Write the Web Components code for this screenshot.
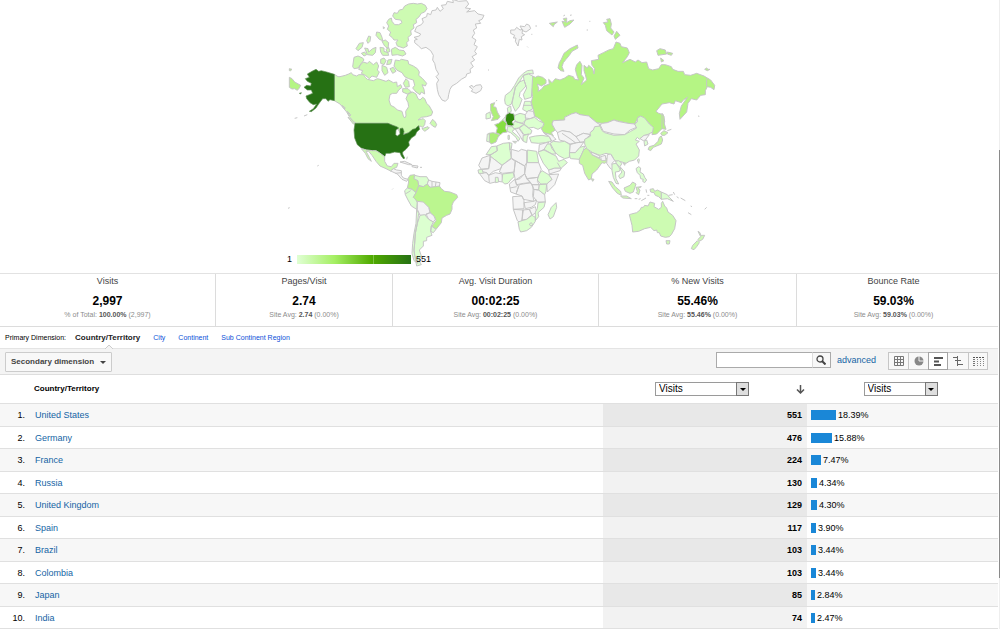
<!DOCTYPE html>
<html lang="en">
<head>
<meta charset="utf-8">
<title>Location report</title>
<style>
  body { margin: 0; background: #fff; color: #000; font-family: "Liberation Sans", Arial, sans-serif; font-size: 9px; line-height: 12px; }
</style>
</head>
<body>
<ga-report>
  <ga-map></ga-map>
  <ga-scorecard>
    <ga-metric name="Visits" value="2,997">% of Total: <b>100.00%</b> (2,997)</ga-metric>
    <ga-metric name="Pages/Visit" value="2.74">Site Avg: <b>2.74</b> (0.00%)</ga-metric>
    <ga-metric name="Avg. Visit Duration" value="00:02:25">Site Avg: <b>00:02:25</b> (0.00%)</ga-metric>
    <ga-metric name="% New Visits" value="55.46%">Site Avg: <b>55.46%</b> (0.00%)</ga-metric>
    <ga-metric name="Bounce Rate" value="59.03%">Site Avg: <b>59.03%</b> (0.00%)</ga-metric>
  </ga-scorecard>
  <ga-dimensions></ga-dimensions>
  <ga-toolbar></ga-toolbar>
  <ga-table></ga-table>
</ga-report>

<template id="t-report">
  <style>
    :host { display: block; position: relative; }
    ::slotted(:not(ga-map)) { margin-right: 2px; }
    .thumb { position: absolute; right: 0; top: 150px; bottom: 51px; width: 1px; background: #8a8a8a; }
    .track { position: absolute; right: 0; top: 0; bottom: 0; width: 1px; background: #eee; }
  </style>
  <slot></slot>
  <div class="track"></div><div class="thumb"></div>
</template>

<template id="t-map">
  <style>
    :host { display: flex; justify-content: center; }
    .map { position: relative; width: 440px; }
    svg { display: block; width: 100%; }
    path { stroke: #c6c6c6; stroke-width: 3; stroke-linejoin: round; fill: #dcffd0; }
    .n { fill: #f4f4f4; }
    .us { fill: #267114; stroke: #5f8f55; stroke-width: 2; }
    .de { fill: #328a0e; }
    .fr { fill: #87df43; }
    .uk { fill: #aeef78; }
    .ru { fill: #b5f584; }
    .br { fill: #bbf68f; }
    .in { fill: #c6f8a2; }
    .ca { fill: #cdfbb2; }
    .cn { fill: #d6fdc5; }
    .legend { position: absolute; left: 7px; bottom: 8px; display: flex; align-items: center; gap: 5px; }
    .bar { width: 114px; height: 9px; background: linear-gradient(to right, #e0ffd4, #a5ef63 33%, #50aa00 66%, #267114); }
    .bar::after { content: ""; display: block; width: 1px; height: 9px; margin-left: 76px; background: #7cc344; }
  </style>
  <div class="map">
    <svg viewBox="840 0 1320 819" role="img" aria-label="Visits by country">
      <g transform="translate(840 0)">
        <path class="ru" d="M28 232L36 236 44 246 62 256 58 264 52 271 44 266 36 267 28 262ZM28 206l8 2-4 4-4 0z"/>
        <path class="ca" d="M163 223L174 230 180 230 196 226 206 222 214 218 218 224 230 228 236 224 250 224 256 232 262 238 280 242 292 236 300 238 318 244 326 240 340 248 350 246 352 260 362 254 366 262 356 270 350 280 338 280 330 284 327 300 332 316 344 322 352 330 366 334 370 348 374 354 378 348 377 334 386 320 384 308 378 296 384 282 398 276 408 282 414 296 420 300 428 292 434 296 440 310 448 318 458 336 454 346 440 350 424 352 414 360 430 356 436 362 434 374 428 382 420 378 410 382 396 396 372 402 362 402 352 384 338 376 324 370 228 370 220 364 208 350 200 336 180 312 163 302Z"/>
        <path class="ca" d="M450 370l8-12 8 8 4 8-4 8-8-4zM426 386l18-6 4 4-14 10zM204 352l8 4 14 16-6 0z"/>
        <path class="ca" d="M222 172L234 168 248 174 252 180 244 190 234 204 222 206 218 200ZM240 196L250 186 262 190 268 184 280 194 290 186 296 198 292 210 298 216 290 232 276 228 268 236 256 226 244 220 248 212 236 208ZM302 178l10-4 6 8-6 12-10-4zM306 196l14 6 4 16-10 8-8-14zM324 180l12-2-4 14-12 2zM346 180L358 182 364 178 384 182 386 192 400 198 412 206 418 216 416 226 428 236 440 250 436 258 426 254 432 268 434 282 424 276 420 284 408 276 398 264 404 256 400 240 386 236 374 230 366 218 350 210 342 198ZM330 206l10-4 8 12-10 6zM370 250l8-14 8 8 2 16-12 2zM368 266l16 0 10 10-12 6-14-6z"/>
        <path class="ca" d="M228 146L238 130 250 128 246 142 234 152ZM260 122l6-14 6 2-2 14-6 6zM244 160l10-4 6 8-8 4zM254 144L264 146 266 156 278 146 288 142 286 158 278 166 262 164ZM290 96l10 2 6 14 2 10-10-4-10-12zM306 124l10-4 10 8-2 18-10-8zM300 142l12 2 0 10 12 4 2 8-18 0-6-10zM318 148l8-6 4 12-8 4zM310 80l4 4-4 2z"/>
        <path class="ca" d="M374 18L386 12 400 10 412 12 424 10 436 16 441 26 434 36 424 40 416 52 408 58 410 68 400 74 402 84 392 92 394 104 384 112 386 122 380 128 382 138 370 144 352 138 348 128 354 120 342 120 336 112 328 106 332 96 322 88 326 78 320 68 326 58 334 54 336 64 344 74 356 74 366 68 362 60 346 58 338 48 342 38 352 40 358 30 368 28ZM334 148l12-6 12 8 14 2 6 10-10 6-16-4-16 2z"/>
        <path class="n" d="M404 128L404 120 412 118 402 112 418 108 422 102 404 94 410 80 424 74 430 66 426 56 440 50 442 40 452 44 456 32 468 30 472 22 480 34 490 26 484 16 498 14 502 4 520 8 518 -2 536 4 560 2 566 12 556 24 572 26 560 36 584 32 594 42 612 46 606 58 596 62 602 70 586 72 590 84 580 90 584 100 576 112 588 120 582 134 592 140 584 154 590 162 576 170 584 180 572 188 580 200 570 208 572 218 560 222 558 230 544 238 530 250 516 258 510 268 506 284 504 296 496 304 486 300 476 284 472 268 470 250 476 240 468 230 476 222 468 208 464 190 458 180 460 166 452 152 438 142 424 146 416 138Z"/>
        <path class="n" d="M568 260l8-4 4 6 8-6 14-2 4 8-4 10-14 8-14-6 4-6z"/>
        <path class="us" d="M163 223L163 302 150 299 144 304 138 296 128 296 116 312 108 324 94 335 88 334 100 326 110 312 100 314 90 308 80 296 78 288 88 284 98 280 94 270 82 270 72 262 80 256 92 258 94 250 82 244 76 236 88 232 82 222 96 214 108 208 116 214 124 212 140 216ZM58 280l6-2-2 4z"/>
        <path d="M72 348l10-4M44 355l8-2M186 316l10 8-4 2zM202 334l10 10-2 4z"/>
      </g>
      <g transform="translate(840 360)">
        <path class="us" d="M225 10L324 10 338 16 350 20 356 24 348 30 347 44 352 48 360 42 360 26 368 24 372 34 370 44 386 38 398 28 406 26 412 20 416 17 419 28 410 36 406 46 394 54 390 60 386 66 388 76 378 88 368 96 368 102 374 114 371 117 364 108 360 98 344 96 330 100 318 100 314 110 306 104 298 98 288 92 278 92 260 90 244 84 232 74 224 54 222 30Z"/>
        <path class="ca" d="M244 86L260 90 278 92 288 92 298 98 306 104 314 110 314 124 322 138 334 140 342 130 354 130 350 142 340 146 332 153 318 146 300 138 288 124 276 106 266 94 258 94 268 112 274 124 264 116 256 100Z"/>
        <path class="n" d="M332 153L340 146 350 150 364 152 364 166 370 174 384 178 380 184 366 178 352 162ZM346 160L364 158M360 126l14-2 22 10-10 0zM396 136l18 2-2 6-16-4zM420 142l6 0M382 110l-2 8M112 138l4-2M337 208l2-2M24 265l5-2"/>
        <path class="br" d="M390 166L404 164 402 176 414 182 416 198 408 218 396 208 382 204 386 186 384 176Z"/>
        <path d="M404 166L420 170 440 170 446 180 442 192 430 200 416 196 414 182 402 176Z"/>
        <path class="n" d="M446 180L456 184 480 188 478 200 450 202 442 192ZM456 184L456 200M468 186L466 200"/>
        <path d="M382 204L396 208 408 218 400 232 408 240 412 246 410 268 394 258 384 240 376 224 374 212ZM376 222L392 212"/>
        <path class="br" d="M416 198L430 200 442 192 450 202 466 200 478 198 484 206 494 214 510 216 530 224 533 232 520 246 516 256 516 268 510 282 500 286 486 294 484 308 468 328 456 318 468 302 462 288 450 278 446 262 430 250 412 246 408 240 400 232 408 218Z"/>
        <path class="n" d="M412 244L430 246 446 262 450 278 434 286 420 286 412 268ZM438 282L450 278 462 288 466 298 460 306 446 298Z"/>
        <path d="M410 268L416 280 412 310 406 340 404 370 402 390 404 406 414 430 402 422 396 400 398 370 402 340 408 310ZM420 286L434 284 446 298 460 306 454 318 452 334 456 346 440 352 440 362 430 364 430 378 418 390 424 408 416 420 424 434 410 438 404 406 402 390 404 370 406 340 412 310ZM454 318L468 328 460 338 452 334Z"/>
      </g>
      <g transform="translate(1410 0)">
        <path class="n" d="M122 90l12 0 6-8 10 8 8-2-2 12 8 4-10 6 2 10-8-2-4 20-8-14 2-10-8 0 4-8-12-6zM150 78l14 2 6-8 8 4 4 10-14 10-10-4zM184 103l3 0M196 78l5 0M54 210l3 0M172 140l2 2M78 304l3-4"/>
        <path class="ru" d="M238 70L262 66 252 74 250 80ZM276 64L286 66 280 56 290 54 290 68 300 62 312 60 300 72 284 82ZM280 48l5-3M300 46l5-1M350 90l4 0M358 64l3 0"/>
        <path class="ru" d="M322 135L324 144 306 154 298 166 288 178 280 188 276 200 282 214 272 212 264 204 268 188 274 178 282 160 300 146ZM400 68L414 66 410 58 420 56 424 72 422 84 432 96 426 105 410 92 406 76ZM432 108L440 94 450 106 436 118ZM560 152L570 146 586 150 590 162 564 166ZM592 156L608 160 604 166 592 162ZM572 174l10 8-8 4zM704 208l6-4 4 4 6 0-8 4z"/>
        <path class="ru" d="M188 228L196 232 204 228 218 232 228 240 228 250 214 258 202 252 206 266 204 274 214 268 222 258 238 252 236 238 246 248 256 236 270 240 284 234 296 226 310 230 314 238 326 240 320 224 316 208 320 194 330 184 336 196 334 224 342 234 334 254 350 240 346 224 342 212 342 196 352 204 356 196 368 206 372 222 374 206 366 196 364 182 386 178 384 166 400 158 416 150 430 146 438 126 450 130 454 140 472 144 478 158 472 170 458 188 480 178 496 186 504 180 516 188 530 186 536 206 548 210 566 206 574 194 586 194 604 200 608 208 624 214 640 214 644 224 662 226 680 220 702 228 722 240 734 256 732 269 722 262 712 260 706 272 706 284 692 286 680 300 664 296 654 310 650 336 630 358 628 340 634 318 652 292 640 300 634 308 616 302 612 312 598 308 576 312 558 334 566 340 580 344 584 364 578 384 560 402 546 404 548 386 536 368 516 350 506 350 494 372 474 370 432 360 412 368 398 370 380 368 356 348 330 344 318 338 304 342 284 352 284 360 250 362 246 372 256 390 244 398 250 408 240 412 222 400 214 386 222 372 210 358 194 348 190 330 184 306 188 290 184 262ZM710 236L710 260M684 348l4 1"/>
        <path d="M104 300L106 286 122 274 134 256 146 234 160 220 172 212 188 210 190 222 176 220 160 226 148 246 136 262 130 290 124 312 114 318 106 312ZM148 246L162 240 168 258 150 278 148 290 156 298 148 320 136 334 126 312 130 290 136 262ZM160 226L176 222 188 228 186 262 184 292 164 298 160 284 170 264 162 240ZM164 304L182 304 188 326 172 336 158 328ZM160 316L186 316M112 324l10-6 2 16-10 6z"/>
        <path class="n" d="M250 362L284 360 284 352 304 342 318 338 330 344 356 348 380 368 390 374 382 386 366 392 362 404 340 400 318 410 300 396 276 392 268 404 256 390 246 372ZM390 374L398 370 412 368 432 360 442 364 474 370 494 372 500 382 480 390 464 404 432 402 400 394Z"/>
      </g>
      <g transform="translate(1410 300)">
        <path class="uk" d="M62 12L74 8 70 20 78 22 82 36 90 50 84 58 64 62 70 50 66 42 62 32ZM56 100L70 98 90 104 84 112 78 126 64 132 58 126Z"/>
        <path d="M48 42L60 36 62 54 48 57ZM52 102L58 102 58 126 50 124Z"/>
        <path class="fr" d="M74 74L86 70 98 60 110 70 106 84 112 96 98 98 92 104 78 98 82 84Z"/>
        <path d="M98 60L106 50 108 66ZM134 46L150 40 166 44 168 60 156 70 140 66 132 58ZM126 78L134 64 156 70 162 72 146 84 132 86ZM166 60L194 52 206 62 222 70 218 80 204 88 190 82 176 84 162 72ZM148 84L162 74 176 84 186 92 182 102 162 104ZM112 80L126 80 134 88 126 94 140 106 150 116 144 124 138 112 122 98 112 94ZM128 124l12 0-4 6zM114 106l4 0 0 12-4 0zM156 108L176 102 172 112 170 128 160 124ZM178 112L196 108 216 106 238 110 244 124 226 128 206 130 184 128Z"/>
        <path class="de" d="M108 44L118 38 132 42 134 58 126 66 132 74 126 78 112 76 106 60Z"/>
        <path class="n" d="M166 44L174 32 190 34 194 50 180 56 166 54ZM136 88L146 84 160 104 158 122 150 108ZM222 98L244 104 258 118 246 124 238 110ZM208 134L236 126 232 136 222 148 206 156ZM262 98L276 92 300 96 318 110 340 100 362 104 350 114 340 126 320 128 300 132 284 124 268 120ZM276 100L300 116 316 128M318 110L330 126M300 134L320 128 342 126 330 142 316 158 298 158ZM236 210L254 204 274 204 270 212 238 222Z"/>
        <path d="M240 130L250 124 268 126 284 124 300 134 298 172 284 176 268 168 256 158 246 146ZM300 174L298 158 316 158 330 142 344 138 340 152 328 178 304 176ZM232 132L242 132 258 162 246 162 222 148ZM204 156L222 150 246 162 258 168 266 184 282 178 292 188 274 204 254 204 236 210 220 190ZM262 188L272 204"/>
        <path class="in" d="M340 152L352 140 360 156 366 164 392 178 404 180 420 166 412 184 404 190 396 188 380 210 366 222 364 236 356 240 344 220 338 196 328 190 328 178Z"/>
        <path class="in" d="M364 236l8 2-4 6z"/>
        <path d="M48 164L64 140 80 138 82 152 66 162 60 164ZM80 138L100 130 118 128 120 150 124 174 96 196 60 168 66 162 82 152ZM118 128l8 2-2 16-4 4zM172 150L200 154 206 188 172 188Z"/>
        <path class="n" d="M124 148L146 154 154 148 170 152 170 188 164 198 136 182 124 174ZM26 196L36 174 60 166 62 176 56 206 34 208ZM60 168L96 196 92 206 70 214 56 226 50 218 34 214 34 208 56 206ZM28 220L50 218 56 226 76 218 96 222 98 246 84 244 60 250 44 242ZM56 226L58 248M96 196L124 176 136 184 132 216 98 220 88 216ZM136 182L164 198 164 220 150 236 136 240 132 220ZM170 188L206 188 214 208 204 232 170 236 164 220ZM236 224L266 222 254 254 232 276 230 252 246 238ZM136 240L164 222 172 236 182 248 160 250 140 254ZM170 236L204 232 202 244 208 254 186 254ZM148 254L182 248 190 262 188 286 192 304 160 298 156 288 138 282ZM118 252L134 238 140 256 146 258 138 282 122 276ZM120 264L140 260M192 268L206 270 224 284 226 306 202 306 190 290ZM186 254L208 254 206 270 190 268ZM128 290L156 288 162 300 162 326 130 328ZM162 308L190 304 200 300 196 314 184 322 166 326ZM130 328L160 330 156 360 150 368 142 362ZM158 330L178 328 186 344 170 358 156 360ZM178 328L196 320 200 336 186 346Z"/>
        <path d="M24 210L36 208 40 220 26 220ZM76 232l8 0 2 14-10 2zM98 222L130 218 132 230 122 240 114 250 104 252 96 244ZM208 222L216 212 236 224 246 238 230 252 212 252 202 240ZM208 254L230 252 228 274 224 284 206 270ZM204 308L226 306 222 322 204 338 206 350 196 362 196 336 202 326ZM144 366L156 362 170 358 186 346 196 352 196 364 184 382 170 392 152 396 148 388ZM178 372l6-4 4 6-6 4zM258 308L260 322 250 350 240 357 234 344 244 322Z"/>
      </g>
      <g transform="translate(1770 300)">
        <path class="cn" d="M0 98L10 90 14 80 30 78 36 92 44 98 72 106 104 104 122 94 140 84 134 72 142 66 142 54 152 48 164 54 178 72 190 82 188 96 176 102 160 108 148 118 142 112 136 120 148 124 138 132 148 150 146 168 134 180 118 184 108 190 96 186 84 184 74 182 64 164 48 160 30 166 8 158 -10 146 -16 132 -16 118 2 108ZM100 190l6 0-2 6z"/>
        <path class="n" d="M4 156L30 168 28 174 6 164ZM32 170l14-4 2 16-14 0zM52 164L62 162 74 182 66 190 70 212 60 204 50 190ZM150 116L162 106 178 104 166 120 160 122Z"/>
        <path d="M66 192L78 190 92 204 88 214 76 216 78 236 86 252 78 250 70 232 66 212ZM76 184L86 182 96 190 90 200 104 216 102 230 90 236 86 228 96 216 84 198ZM162 124l8-4 4 12-10 6zM142 180l4-4 2 4-2 10zM138 206l8-6 6 4-2 12 10 6 4 10 6 8-6 8-6-4 2-6-8-2-2-10-8-8z"/>
        <path class="ru" d="M216 40L222 50 222 68 228 88 216 86Z"/>
        <path class="in" d="M212 100L222 92 234 98 224 106 216 106ZM214 108L218 120 214 132 200 138 190 142 182 152 174 148 178 140 192 136 204 124 208 112ZM232 92l12-4"/>
        <path class="ca" d="M56 244L66 246 76 260 92 274 94 286 82 280 68 264ZM92 288L110 288 124 296 98 294ZM102 264L120 256 128 246 138 252 134 264 130 276 120 280 106 274ZM138 262l16-2-10 6 6 4-4 14-8-6 4-4zM180 268L190 266 194 274 202 270 214 276 214 298 206 290 196 286 192 278 182 276ZM134 296l8 0M146 298l6-2M154 302l14-8M168 268l2 10M172 286l6 0"/>
        <path d="M214 276L232 284 238 292 250 304 232 296 214 298ZM236 286l12-2M250 276l4 8M260 290l6 4M272 294l14 8M302 318l4 2M294 338l10 6M344 328l6-6"/>
        <path class="ca" d="M118 344L124 342 140 338 150 330 154 322 160 322 164 316 174 318 180 306 194 310 192 320 206 328 214 322 214 310 218 304 224 318 230 324 234 336 248 346 258 362 254 386 244 404 238 410 226 412 212 408 208 398 202 398 200 390 192 392 182 382 164 386 146 394 128 396 126 376ZM228 422l12 0-2 10-8 0zM324 394L330 398 332 406 344 406 338 418 328 424 324 418 332 410ZM322 422L328 428 320 440 312 449 304 446 308 436Z"/>
      </g>
    </svg>
    <div class="legend"><span>1</span><div class="bar"></div><span>551</span></div>
  </div>
</template>

<template id="t-scorecard">
  <style>
    :host { display: grid; grid-template-columns: 216fr 177fr 206fr 198fr 193fr; padding-right: 8px; border-top: 1px solid #e2e2e2; border-bottom: 1px solid #dcdcdc; }
    ::slotted(:not(:last-child)) { border-right: 1px solid #dcdcdc; }
  </style>
  <slot></slot>
</template>

<template id="t-metric">
  <style>
    :host { display: block; text-align: center; padding: 1px 0 5px; }
    .name { color: #444; margin-bottom: 6px; }
    .value { font-size: 12px; line-height: 16px; font-weight: bold; }
    .note { font-size: 7px; color: #8c8c8c; }
    ::slotted(b) { color: #555; }
  </style>
  <div class="name"></div><div class="value"></div><div class="note"><slot></slot></div>
</template>

<template id="t-dimensions">
  <style>
    :host { display: flex; align-items: center; gap: 13px; height: 21px; padding-left: 5px; font-size: 7px; }
    .lead { display: flex; align-items: center; gap: 9px; }
    .now { position: relative; font-size: 8px; color: #222; font-weight: bold; }
    .now svg { position: absolute; left: 30px; top: 12px; }
    a { color: #0b50d8; text-decoration: none; }
    svg { display: block; }
  </style>
  <div class="lead"><span>Primary Dimension:</span>
    <span class="now">Country/Territory<svg width="9" height="5" viewBox="0 0 9 5"><path d="M0 5L4 1 8 5" fill="#f4f4f4" stroke="#ccc"/></svg></span></div>
  <a href="#city">City</a><a href="#continent">Continent</a><a href="#region">Sub Continent Region</a>
</template>

<template id="t-toolbar">
  <style>
    :host { display: flex; align-items: flex-start; padding: 3px 10px 2px 5px; background: #f4f4f4; border-top: 1px solid #e4e4e4; border-bottom: 1px solid #dedede; }
    button, input { box-sizing: border-box; margin: 0; padding: 0; border: 1px solid #bbb; font: inherit; background: #fff; }
    svg { display: block; }
    .second { display: flex; align-items: center; justify-content: space-between; width: 107px; height: 20px; padding: 0 5px; font-size: 8px; font-weight: bold; color: #444; border-color: #ccc; border-radius: 1px; background: #f8f8f8; }
    .search { display: flex; margin-left: auto; }
    .search input { width: 96px; height: 16px; border-right: 0; outline: 0; border-color: #aaa; }
    .search button { display: grid; place-items: center; width: 19px; height: 16px; border-color: #aaa; border-left-color: #ddd; background: #f8f8f8; }
    a { margin: 2px 12px 0 6px; color: #1464a5; text-decoration: none; }
    .views { display: flex; }
    .views button { display: grid; place-items: center; width: 20px; height: 18px; border-color: #c6c6c6; border-right-width: 0; background: #f8f8f8; }
    .views button:last-child { border-right-width: 1px; }
    .views .on { border: 1px solid #a4a4a4; background: #fff; }
    .views .on + button { border-left-width: 0; }
  </style>
  <button class="second">Secondary dimension <svg width="6" height="3"><path d="M0 0h6L3 3z" fill="#444"/></svg></button>
  <form class="search"><input type="text" aria-label="Search"><button type="button" aria-label="Search"><svg width="10" height="10" viewBox="0 0 10 10"><circle cx="4" cy="4" r="3" fill="none" stroke="#444" stroke-width="1.3"/><path d="M6 6l3.5 3.5" stroke="#444" stroke-width="2"/></svg></button></form>
  <a href="#advanced">advanced</a>
  <div class="views">
    <button aria-label="Table"><svg width="10" height="10" viewBox="0 0 10 10"><path d="M.5.5h9v9h-9zM3.5 0v10M6.5 0v10M0 3.5h10M0 6.5h10" fill="none" stroke="#777"/></svg></button>
    <button aria-label="Percentage"><svg width="10" height="10" viewBox="0 0 10 10"><circle cx="5" cy="5" r="4.5" fill="#888"/><path d="M5 0V5H10" fill="none" stroke="#eee"/></svg></button>
    <button class="on" aria-label="Performance"><svg width="9" height="9" viewBox="0 0 9 9"><path d="M0 1h9M0 4.500h5M0 8h7" stroke="#555" stroke-width="2"/></svg></button>
    <button aria-label="Comparison"><svg width="10" height="10" viewBox="0 0 10 10"><path d="M4.500 0v10M0 1.500h4M2 4.500h6M5 8.500h5" stroke="#666"/></svg></button>
    <button aria-label="Pivot"><svg width="11" height="9" viewBox="0 0 11 9"><path d="M0 .5h2M3 .5h2M6 .5h2M9 .5h2" stroke="#555"/><path d="M0 2.500h2M0 4.500h2M0 6.500h2M0 8.500h2" stroke="#777"/><path d="M4.500 2v7M7.500 2v7M10.500 2v7" stroke="#888" stroke-dasharray="1 1"/></svg></button>
  </div>
</template>

<template id="t-select">
  <style>
    :host { display: inline-block; position: relative; width: 74px; height: 14px; }
    select { display: block; box-sizing: border-box; width: 100%; height: 14px; margin: 0; padding: 0 14px 0 3px; border: 1px solid #9a9a9a; border-radius: 0; background: #fff; appearance: none; font: inherit; line-height: 12px; color: #000; }
    .arrow { position: absolute; right: 0; top: 0; box-sizing: border-box; width: 13px; height: 14px; border: 1px solid #777; background: #dedede; display: grid; place-items: center; pointer-events: none; }
    svg { display: block; }
  </style>
  <select aria-label="Metric"><option>Visits</option></select>
  <span class="arrow"><svg width="6" height="3"><path d="M0 0h6L3 3z" fill="#000"/></svg></span>
</template>

<template id="t-table">
  <style>
    :host { display: block; }
    table { width: 100%; border-collapse: separate; border-spacing: 0; table-layout: fixed; }
    col.rank { width: 25px; } col.sorted { width: 204px; } col.share { width: 191px; }
    th, td { box-sizing: border-box; padding: 0; text-align: left; border-bottom: 1px solid #e0e0e0; }
    th { height: 29px; font-size: 8px; font-weight: bold; }
    th.name { padding-left: 9px; }
    .pick { display: flex; align-items: center; justify-content: space-between; padding: 0 2px 0 52px; font-size: 10px; font-weight: normal; }
    .pick ga-select { width: 94px; }
    .mid { padding-right: 4px; text-align: center; font-size: 10px; font-weight: normal; line-height: 14px; }
    .mid ga-select { vertical-align: top; text-align: left; }
    svg { display: block; }
    td { height: 22px; }
    tbody tr:nth-child(odd) td { height: 23px; background: #f7f7f7; }
    tbody td.rank { text-align: right; }
    td.name { padding-left: 10px; }
    td.visits { padding-right: 5px; text-align: right; font-weight: bold; background: #f2f2f2; }
    tbody tr:nth-child(odd) td.visits { background: #e8e8e8; }
    td.share { padding-left: 4px; }
    .share div { display: flex; align-items: center; gap: 2px; }
    i { display: block; height: 10px; background: #1a87d7; }
    a { color: #1464a5; text-decoration: none; }
  </style>
  <table>
    <colgroup><col class="rank"><col><col class="sorted"><col class="share"></colgroup>
    <thead><tr><th></th><th class="name">Country/Territory</th>
      <th><div class="pick"><ga-select></ga-select><svg width="9" height="9" viewBox="0 0 9 9"><path d="M4.500 0v8M1 4.500L4.500 8 8 4.500" fill="none" stroke="#555" stroke-width="1.500"/></svg></div></th>
      <th class="mid"><ga-select></ga-select></th></tr></thead>
    <tbody></tbody>
  </table>
</template>

<script>
  const stamp = (host, id) => {
    const root = host.attachShadow({ mode: 'open' });
    root.append(document.getElementById(id).content.cloneNode(true));
    return root;
  };
  const define = (name, setup) => customElements.define('ga-' + name, class extends HTMLElement {
    constructor() { super(); this.parts = stamp(this, 't-' + name); }
    connectedCallback() { if (setup) setup(this, this.parts); }
  });

  for (const name of ['report', 'map', 'scorecard', 'dimensions', 'toolbar', 'select']) define(name);

  define('metric', (host, root) => {
    root.querySelector('.name').textContent = host.getAttribute('name');
    root.querySelector('.value').textContent = host.getAttribute('value');
  });

  // country, visits, share of all visits, bar width
  const rows = [
    ['United States', 551, '18.39%', 25], ['Germany', 476, '15.88%', 21], ['France', 224, '7.47%', 10],
    ['Russia', 130, '4.34%', 6], ['United Kingdom', 129, '4.30%', 6], ['Spain', 117, '3.90%', 5],
    ['Brazil', 103, '3.44%', 5], ['Colombia', 103, '3.44%', 5], ['Japan', 85, '2.84%', 4], ['India', 74, '2.47%', 4]
  ];
  define('table', (host, root) => {
    root.querySelector('tbody').innerHTML = rows.map(([name, visits, share, width], i) =>
      `<tr><td class="rank">${i + 1}.</td><td class="name"><a href="#${i + 1}">${name}</a></td>
       <td class="visits">${visits}</td><td class="share"><div><i style="width:${width}px"></i>${share}</div></td></tr>`).join('');
  });
</script>
</body>
</html>
